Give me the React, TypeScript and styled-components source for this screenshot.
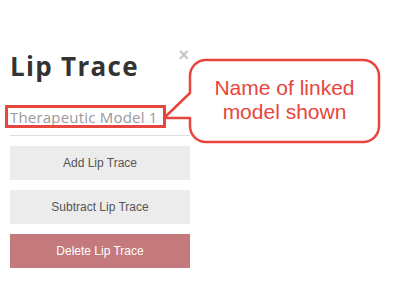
import React from "react";
import styled, { createGlobalStyle } from "styled-components";

const GlobalStyle = createGlobalStyle`
  body {
    margin: 0;
    background: #ffffff;
    font-family: "Liberation Sans", Arial, sans-serif;
  }
`;

const Page = styled.div`
  position: relative;
  width: 396px;
  height: 288px;
  overflow: hidden;
`;

const Panel = styled.div`
  margin-top: 30px;
  width: 200px;
  height: 257px;
  box-sizing: border-box;
  padding: 0 10px;
  display: flex;
  flex-direction: column;
`;

const Header = styled.div`
  display: flex;
  justify-content: space-between;
  align-items: flex-start;
  margin-top: 20px;
`;

const Title = styled.h1`
  margin: 0;
  font-family: "Open Sans", sans-serif;
  font-weight: 700;
  font-size: 26px;
  line-height: 32px;
  color: #333333;
  letter-spacing: 1.3px;
`;

const Close = styled.span`
  font-family: "Liberation Sans", Arial, sans-serif;
  font-weight: 700;
  font-size: 18px;
  line-height: 18px;
  color: #c4c4c4;
  margin-top: -4px;
  margin-right: 1px;
`;

const ModelName = styled.div`
  margin-top: 25px;
  padding-bottom: 8px;
  border-bottom: 1px solid #dddddd;
  font-family: "Open Sans", sans-serif;
  font-size: 15px;
  line-height: 20px;
  letter-spacing: 0.2px;
  color: #9a9a9a;
  position: relative;
`;

const Highlight = styled.span`
  position: absolute;
  left: -5px;
  top: -2px;
  width: 161px;
  height: 23px;
  border: 3px solid #e5473f;
  box-sizing: border-box;
`;

const Actions = styled.div`
  display: flex;
  flex-direction: column;
  gap: 10px;
  margin-top: 10px;
`;

const ActionButton = styled.button<{ $danger?: boolean }>`
  height: 34px;
  border: none;
  margin: 0;
  padding: 0;
  font-family: "Liberation Sans", Arial, sans-serif;
  font-size: 12px;
  background: ${(p) => (p.$danger ? "#c47a7c" : "#ececec")};
  color: ${(p) => (p.$danger ? "#ffffff" : "#555555")};
`;

const Callout = styled.div`
  position: absolute;
  left: 160px;
  top: 57px;
  width: 222px;
  height: 88px;
`;

const CalloutText = styled.div`
  position: absolute;
  left: 30px;
  width: 189px;
  top: 19px;
  text-align: center;
  font-family: "Liberation Sans", Arial, sans-serif;
  font-size: 21px;
  line-height: 24px;
  color: #e8453c;
`;

export default function App() {
  return (
    <Page>
      <GlobalStyle />
      <Panel>
        <Header>
          <Title>Lip Trace</Title>
          <Close>×</Close>
        </Header>
        <ModelName>
          Therapeutic Model 1
          <Highlight />
        </ModelName>
        <Actions>
          <ActionButton>Add Lip Trace</ActionButton>
          <ActionButton>Subtract Lip Trace</ActionButton>
          <ActionButton $danger>Delete Lip Trace</ActionButton>
        </Actions>
      </Panel>
      <Callout>
        <svg width="222" height="88" viewBox="0 0 222 88">
          <path
            d="M46 3 H203 A16 16 0 0 1 219 19 V69 A16 16 0 0 1 203 85 H46 A16 16 0 0 1 30 69 V61 L4 61 L30 36 V19 A16 16 0 0 1 46 3 Z"
            fill="#ffffff"
            stroke="#e8453c"
            strokeWidth="2.5"
            strokeLinejoin="round"
          />
        </svg>
        <CalloutText>
          Name of linked
          <br />
          model shown
        </CalloutText>
      </Callout>
    </Page>
  );
}
